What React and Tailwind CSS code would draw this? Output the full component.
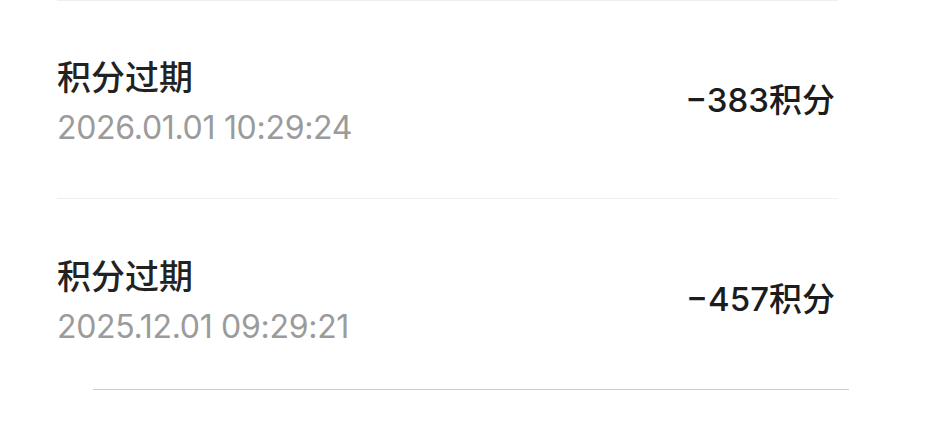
import React from 'react';

const records = [
  { title: '积分过期', time: '2026.01.01 10:29:24', amount: '−383积分', box: 'h-[198px]' },
  { title: '积分过期', time: '2025.12.01 09:29:21', amount: '−457积分', box: 'h-[191px] pt-[10px]' },
];

const font = { fontFamily: 'Inter, "Noto Sans CJK SC", sans-serif' };

const RecordRow = ({ title, time, amount, box }) => (
  <div className={`flex items-center justify-between border-t border-[#efefef] pr-[3px] ${box}`}>
    <div className="flex flex-col pt-[6px]">
      <div className="text-[34px] leading-[46px] font-medium text-[#222222]">{title}</div>
      <div className="mt-[4px] text-[32px] leading-[46px] tracking-[-0.3px] text-[#9b9b9b]">{time}</div>
    </div>
    <div className="text-[33px] leading-[44px] font-medium text-[#1c1c1c]">{amount}</div>
  </div>
);

export default function App() {
  return (
    <div className="w-[931px] h-[437px] bg-white overflow-hidden" style={font}>
      <div className="ml-[57px] w-[781px]">
        {records.map((r, i) => (
          <RecordRow key={i} {...r} />
        ))}
      </div>
      <div className="ml-[93px] w-[756px] h-px bg-[#e6cc9c]" />
    </div>
  );
}
